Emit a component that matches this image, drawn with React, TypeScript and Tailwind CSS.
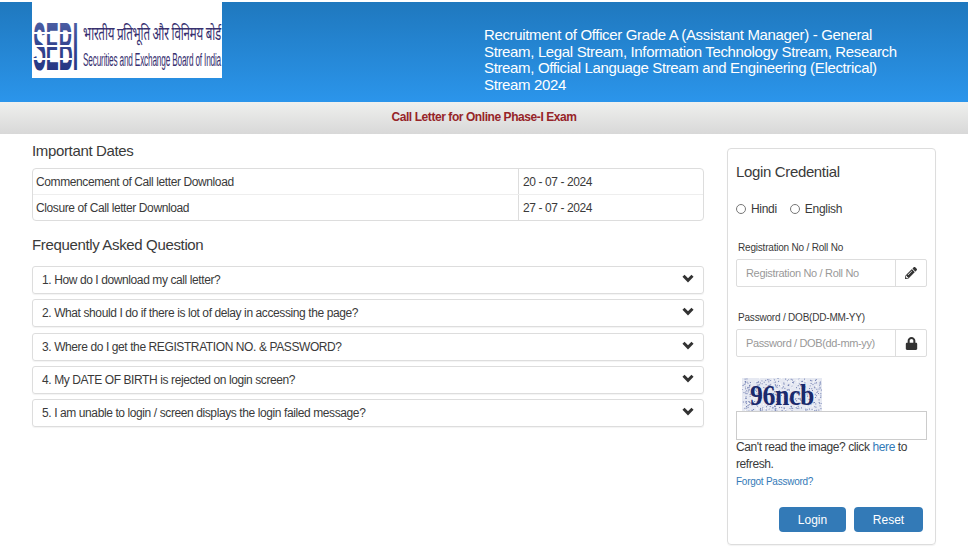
import React from "react";
import { FaPencilAlt, FaLock } from "react-icons/fa";

const faqs = [
  "1. How do I download my call letter?",
  "2. What should I do if there is lot of delay in accessing the page?",
  "3. Where do I get the REGISTRATION NO. & PASSWORD?",
  "4. My DATE OF BIRTH is rejected on login screen?",
  "5. I am unable to login / screen displays the login failed message?",
];

function seeded(n: number) {
  const out: [number, number][] = [];
  let s = 17;
  for (let i = 0; i < n; i++) {
    s = (s * 9301 + 49297) % 233280;
    const x = (s / 233280) * 80;
    s = (s * 9301 + 49297) % 233280;
    const y = (s / 233280) * 34;
    out.push([x, y]);
  }
  return out;
}

function Captcha() {
  return (
    <svg width="80" height="34" viewBox="0 0 80 34" className="block">
      <rect width="80" height="34" fill="#e6e9f2" />
      {seeded(480).map(([x, y], i) => (
        <rect key={i} x={x} y={y} width="1" height="1" fill={i % 3 ? "#6f7db0" : "#ffffff"} />
      ))}
      <text x="8" y="27" fontFamily="'Liberation Serif', serif" fontWeight="700" fontSize="29" fill="#1a2a6c" textLength="64" lengthAdjust="spacingAndGlyphs">
        96ncb
      </text>
    </svg>
  );
}

function Chevron() {
  return (
    <svg width="12" height="9" viewBox="0 0 12 9" className="-mt-[3px]">
      <polyline points="1.5,1.8 6,6.3 10.5,1.8" fill="none" stroke="#333" strokeWidth="3" />
    </svg>
  );
}

function Logo() {
  return (
    <svg width="190" height="76" viewBox="0 0 190 76" className="block shrink-0 bg-white">
      <defs>
        <linearGradient id="sebi" x1="0" y1="0" x2="0" y2="1">
          <stop offset="0" stopColor="#5a6cae" />
          <stop offset="0.5" stopColor="#32448f" />
          <stop offset="1" stopColor="#1f2f7d" />
        </linearGradient>
      </defs>
      <text transform="translate(1,68) scale(0.26,1)" fontFamily="'Liberation Sans', sans-serif" fontWeight="700" fontSize="68" fill="url(#sebi)" textLength="173" lengthAdjust="spacingAndGlyphs">
        SEBI
      </text>
      <rect x="0" y="30" width="40" height="2" fill="#fff" />
      <rect x="0" y="43" width="40" height="2" fill="#fff" />
      <rect x="0" y="56" width="40" height="2" fill="#fff" />
      <text transform="translate(51,38) scale(0.5,1)" fontFamily="'Noto Sans', 'DejaVu Sans', sans-serif" fontSize="19" fill="#37306f" textLength="276" lengthAdjust="spacingAndGlyphs">
        भारतीय प्रतिभूति और विनिमय बोर्ड
      </text>
      <text transform="translate(51,64) scale(0.43,1)" fontFamily="'Liberation Sans', sans-serif" fontSize="19" fill="#37306f" textLength="321" lengthAdjust="spacingAndGlyphs">
        Securities and Exchange Board of India
      </text>
    </svg>
  );
}

export default function App() {
  return (
    <div className="w-[968px] h-[550px] overflow-hidden bg-white text-[#3a3a3a] font-['Liberation_Sans',Arial,sans-serif] text-[12px] tracking-[-0.4px]">
      <header className="mt-[2px] h-[100px] bg-gradient-to-b from-[#1f78be] to-[#2b95eb] flex pl-[32px]">
        <Logo />
        <div className="ml-[262px] mt-[25px] w-[420px] text-white text-[15px] tracking-[-0.35px] leading-[16.5px]">
          Recruitment of Officer Grade A (Assistant Manager) - General Stream, Legal Stream, Information Technology Stream, Research Stream, Official Language Stream and Engineering (Electrical) Stream 2024
        </div>
      </header>
      <div className="h-[32px] pb-[2px] bg-gradient-to-b from-[#eff0ee] to-[#d8d8d8] flex items-center justify-center font-bold text-[#962428] tracking-[-0.43px]">
        Call Letter for Online Phase-I Exam
      </div>
      <main className="flex pl-[32px] pt-[10px]">
        <section className="w-[672px]">
          <h2 className="text-[15px] tracking-[-0.35px] leading-[18px] mt-[-2px]">Important Dates</h2>
          <div className="mt-[8px] border border-[#ddd] rounded-[4px]">
            <div className="flex h-[26px] items-center border-b border-[#eee]">
              <div className="w-[486px] pl-[3px] h-full flex items-center border-r border-[#ddd]">Commencement of Call letter Download</div>
              <div className="pl-[4px]">20 - 07 - 2024</div>
            </div>
            <div className="flex h-[25px] items-center">
              <div className="w-[486px] pl-[3px] h-full flex items-center border-r border-[#ddd]">Closure of Call letter Download</div>
              <div className="pl-[4px]">27 - 07 - 2024</div>
            </div>
          </div>
          <h2 className="text-[15px] tracking-[-0.35px] leading-[18px] mt-[15px]">Frequently Asked Question</h2>
          <div className="mt-[12px] flex flex-col gap-[5.25px]">
            {faqs.map((q) => (
              <div key={q} className="h-[28px] border border-[#ddd] rounded-[3px] shadow-[0_1px_1px_rgba(0,0,0,0.05)] flex items-center justify-between pl-[9px] pr-[9px]">
                <span>{q}</span>
                <Chevron />
              </div>
            ))}
          </div>
        </section>
        <aside className="ml-[23px] mt-[4px] w-[209px] h-[397px] border border-[#ddd] rounded-[4px] shadow-[0_1px_1px_rgba(0,0,0,0.05)] px-[8px] pt-[14px]">
          <h2 className="text-[15px] tracking-[-0.35px] leading-[18px]">Login Credential</h2>
          <div className="mt-[21px] flex items-center h-[14px] tracking-[-0.3px]">
            <span className="w-[10px] h-[10px] rounded-full border border-[#777] mr-[5px]" />
            <span>Hindi</span>
            <span className="w-[10px] h-[10px] rounded-full border border-[#777] ml-[13px] mr-[5px]" />
            <span>English</span>
          </div>
          <label className="block mt-[26px] pl-[2px] text-[10px] tracking-[-0.2px] leading-[12px]">Registration No / Roll No</label>
          <div className="mt-[5px] flex h-[28px] w-[191px] border border-[#ddd] rounded-[2px]">
            <div className="flex-1 flex items-center pl-[9px] text-[11px] tracking-[-0.33px] text-[#999] border-r border-[#ddd]">Registration No / Roll No</div>
            <div className="w-[30px] flex items-center justify-center"><FaPencilAlt className="text-[12px] text-[#333]" /></div>
          </div>
          <label className="block mt-[25px] pl-[2px] text-[10px] tracking-[-0.2px] leading-[12px]">Password / DOB(DD-MM-YY)</label>
          <div className="mt-[5px] flex h-[28px] w-[191px] border border-[#ddd] rounded-[2px]">
            <div className="flex-1 flex items-center pl-[9px] text-[11px] tracking-[-0.36px] text-[#999] border-r border-[#ddd]">Password / DOB(dd-mm-yy)</div>
            <div className="w-[30px] flex items-center justify-center"><FaLock className="text-[13px] text-[#333]" /></div>
          </div>
          <div className="mt-[21px] ml-[6px]"><Captcha /></div>
          <div className="w-[191px] h-[29px] border border-[#ccc] -mt-[1px] relative" />
          <p className="-mt-[1px] text-[12px] leading-[17px]">
            Can't read the image? click <span className="text-[#337ab7]">here</span> to refresh.
          </p>
          <p className="mt-[1px] text-[10px] tracking-[-0.25px] leading-[15px] text-[#337ab7]">Forgot Password?</p>
          <div className="mt-[18px] flex gap-[8px] pl-[43px] tracking-normal">
            <button className="w-[67px] h-[25px] rounded-[4px] bg-[#337ab7] text-white text-[12px]">Login</button>
            <button className="w-[69px] h-[25px] rounded-[4px] bg-[#337ab7] text-white text-[12px]">Reset</button>
          </div>
        </aside>
      </main>
    </div>
  );
}
